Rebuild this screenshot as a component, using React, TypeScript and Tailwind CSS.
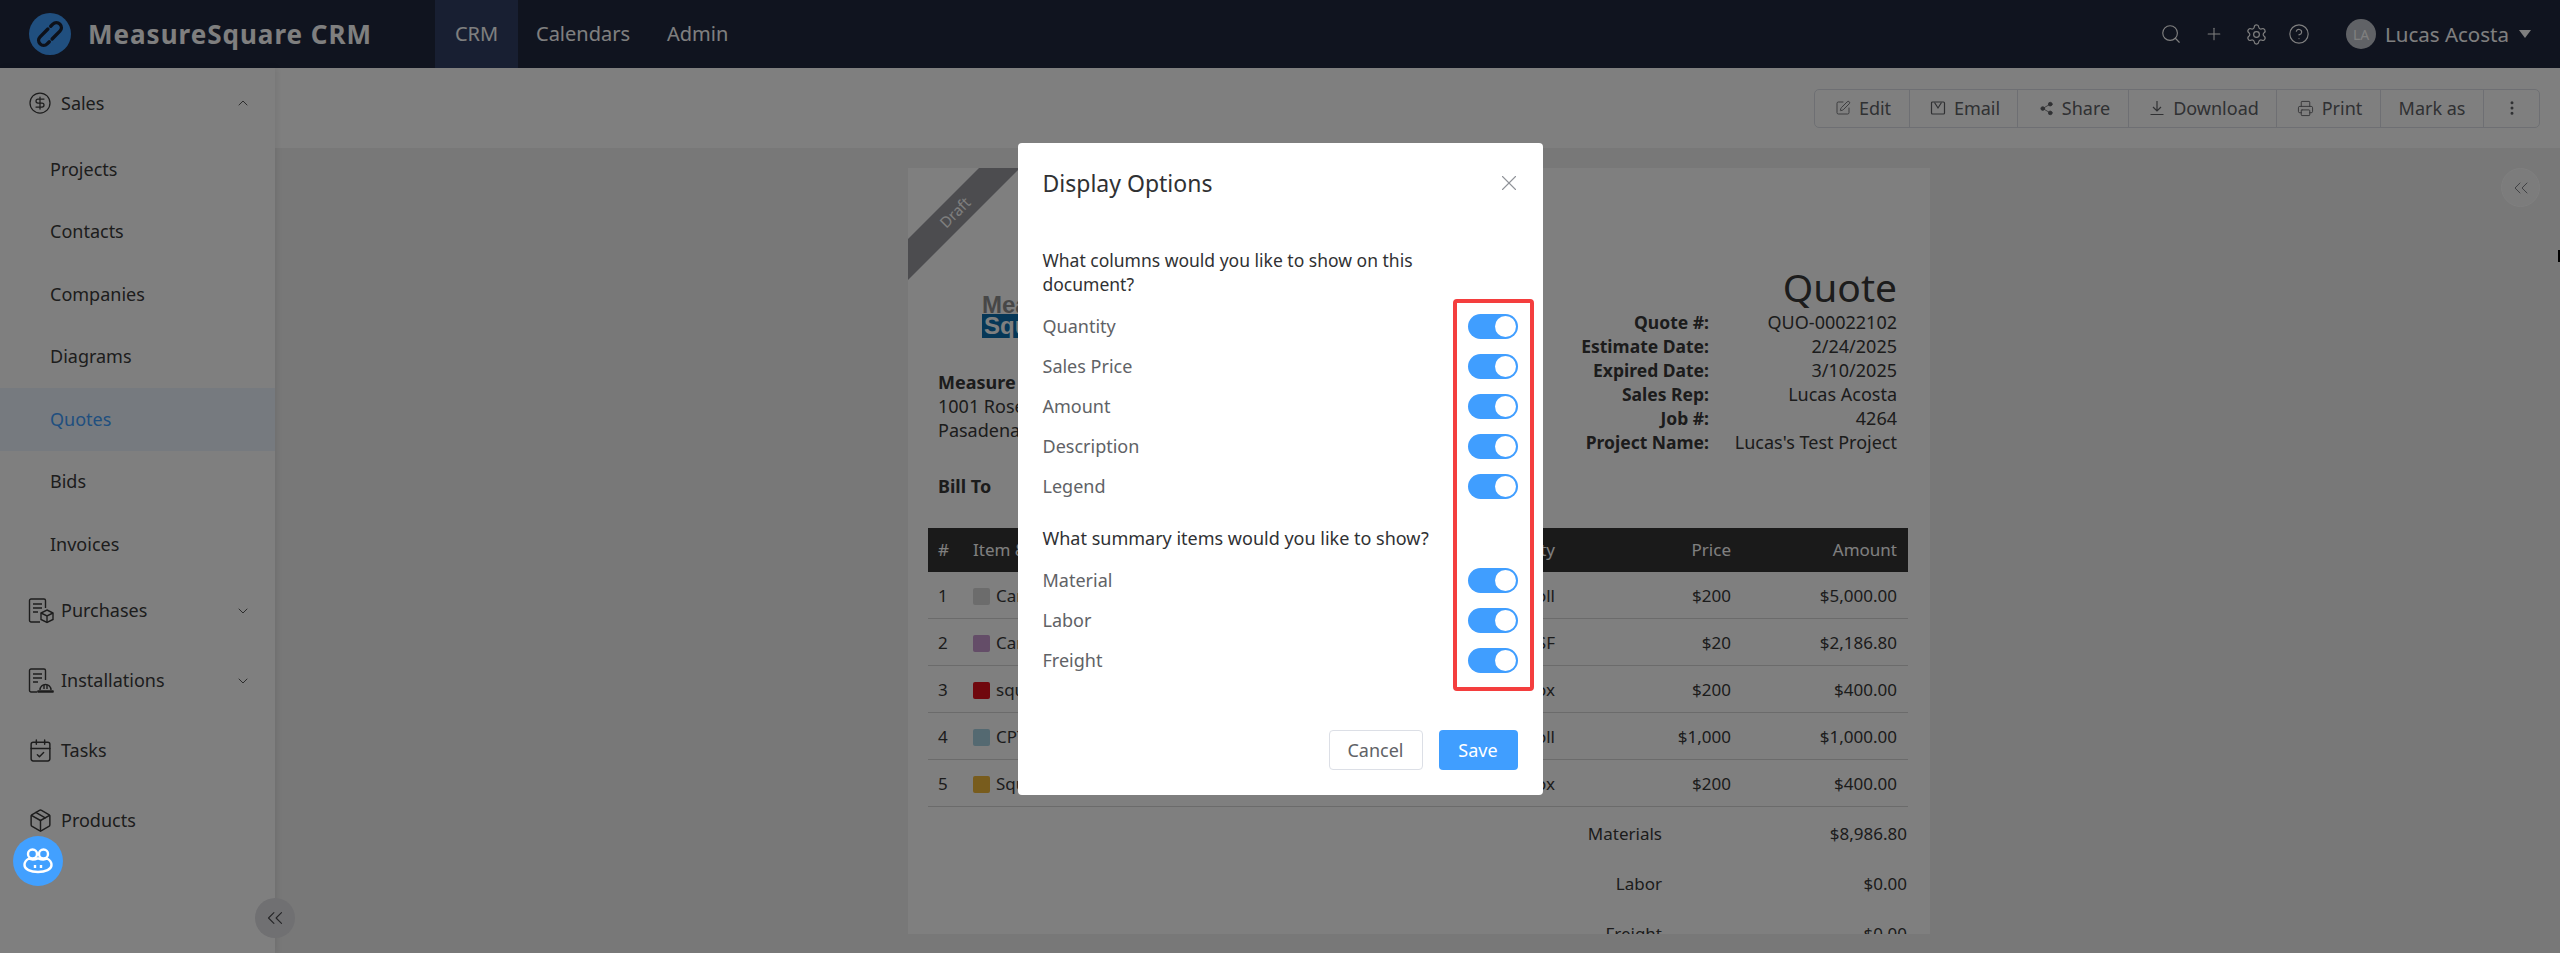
import type { ReactNode } from 'react';
import {
  ChevronDown,
  ChevronUp,
  ChevronsLeft,
  CircleDollarSign,
  CircleHelp,
  CalendarCheck,
  EllipsisVertical,
  Package,
  Plus,
  Printer,
  Search,
  Settings,
  Share2,
  SquarePen,
  X,
} from 'lucide-react';

function LinkLogo() {
  return (
    <svg width="42" height="42" viewBox="0 0 42 42" className="shrink-0">
      <circle cx="21" cy="21" r="21" fill="#409eff" />
      <g transform="rotate(45 21 21)" fill="none" stroke="#1b2233" strokeWidth="3.400" strokeLinecap="round">
        <path d="M16 15v-3a5 5 0 0 1 10 0v11" />
        <path d="M26 27v3a5 5 0 0 1-10 0V19" />
      </g>
    </svg>
  );
}

function PurchasesIcon() {
  return (
    <svg width="26" height="26" viewBox="0 0 26 26" fill="none" stroke="currentColor" strokeWidth="1.4">
      <path d="M12 24H3a1.500 1.500 0 0 1-1.500-1.500v-20A1.500 1.500 0 0 1 3 1h13a1.500 1.500 0 0 1 1.500 1.500V10" />
      <path d="M5 6h9M5 10h9M5 14h5" />
      <path d="M19 12l6 3v6.500l-6 3-6-3V15z" />
      <path d="M13 15l6 3 6-3M19 18v6.500" />
    </svg>
  );
}

function InstallationsIcon() {
  return (
    <svg width="26" height="26" viewBox="0 0 26 26" fill="none" stroke="currentColor" strokeWidth="1.4">
      <path d="M9 24H3a1.500 1.500 0 0 1-1.500-1.500v-20A1.500 1.500 0 0 1 3 1h13a1.500 1.500 0 0 1 1.500 1.500V12" />
      <path d="M5 6h9M5 10h9M5 14h5" />
      <path d="M10 24a1 1 0 0 1 0-1h15a1 1 0 0 1 0 1zM12 22a5.500 5.500 0 0 1 11 0" />
      <path d="M16 17v4M19 17v4" />
    </svg>
  );
}

function EmailIcon() {
  return (
    <svg width="16" height="16" viewBox="0 0 16 16" fill="none" stroke="currentColor" strokeWidth="1.2">
      <rect x="1.500" y="2" width="13" height="12" rx="1" />
      <path d="M4.500 2.500 8 8l3.500-5.500" />
    </svg>
  );
}

function DownloadIcon() {
  return (
    <svg width="16" height="16" viewBox="0 0 16 16" fill="none" stroke="currentColor" strokeWidth="1.2">
      <path d="M8 1v9M4 7l4 4 4-4M1.500 14.500h13" />
    </svg>
  );
}

function FrogIcon() {
  return (
    <svg width="30" height="26" viewBox="0 0 30 26" fill="none" stroke="#fff" strokeWidth="2.4">
      <circle cx="9.500" cy="6" r="4.500" />
      <circle cx="20.500" cy="6" r="4.500" />
      <path d="M6 10.500C3 12 1.500 14.500 1.500 17c0 4.500 6 7 13.500 7s13.500-2.500 13.500-7c0-2.500-1.500-5-4.500-6.500-2.500 1.500-6 1-9-.2-3 1.200-6.500 1.700-9 .2z" />
      <path d="M12 17v3M18 17v3" />
    </svg>
  );
}

function SidebarGroup({ icon, label, open, h }: { icon: ReactNode; label: string; open?: boolean; h: string }) {
  return (
    <div className={`flex items-center pl-[28px] pr-[24px] text-[#3a3a3a] ${h}`}>
      <span className="flex w-[33px] shrink-0 items-center">{icon}</span>
      <span className="flex-1 text-[18px]">{label}</span>
      {label === 'Tasks' || label === 'Products' ? null : open ? (
        <ChevronUp size={16} strokeWidth={1.25} />
      ) : (
        <ChevronDown size={16} strokeWidth={1.25} />
      )}
    </div>
  );
}

function ToolButton({ icon, label, w }: { icon?: ReactNode; label?: string; w: string }) {
  return (
    <button className={`flex h-full items-center justify-center gap-[8px] border-r border-[#dcdfe6] text-[18px] text-[#606266] last:border-r-0 ${w}`}>
      {icon}
      {label}
    </button>
  );
}

function Toggle() {
  return (
    <div className="flex h-[25px] w-[50px] items-center justify-end rounded-full bg-[#409eff] p-[2px]">
      <div className="size-[21px] rounded-full bg-white" />
    </div>
  );
}

function OptionRow({ label }: { label: string }) {
  return (
    <div className="flex h-[40px] items-center justify-between text-[18px] text-[#606266]">
      <span>{label}</span>
      <Toggle />
    </div>
  );
}

const details = [
  ['Quote #:', 'QUO-00022102'],
  ['Estimate Date:', '2/24/2025'],
  ['Expired Date:', '3/10/2025'],
  ['Sales Rep:', 'Lucas Acosta'],
  ['Job #:', '4264'],
  ['Project Name:', "Lucas's Test Project"],
];

const rows = [
  { n: 1, color: 'bg-[#d9d9d9]', name: 'Carpet', unit: 'Roll', price: '$200', amount: '$5,000.00' },
  { n: 2, color: 'bg-[#c99ad0]', name: 'Carpet', unit: 'SF', price: '$20', amount: '$2,186.80' },
  { n: 3, color: 'bg-[#e0101c]', name: 'square', unit: 'Box', price: '$200', amount: '$400.00' },
  { n: 4, color: 'bg-[#a9d3e3]', name: 'CPT', unit: 'Roll', price: '$1,000', amount: '$1,000.00' },
  { n: 5, color: 'bg-[#f0b93a]', name: 'Square', unit: 'Box', price: '$200', amount: '$400.00' },
];

const summary = [
  ['Materials', '$8,986.80'],
  ['Labor', '$0.00'],
  ['Freight', '$0.00'],
];

const subItems = ['Projects', 'Contacts', 'Companies', 'Diagrams', 'Quotes', 'Bids', 'Invoices'];

export default function App() {
  return (
    <div className="relative flex h-screen w-full flex-col overflow-hidden bg-white font-['Noto_Sans',sans-serif] text-[#383838]">
      <header className="flex h-[68px] shrink-0 items-center bg-[#20283e] pl-[29px] pr-[29px] text-white">
        <LinkLogo />
        <span className="ml-[17px] w-[347px] text-[26px] font-bold tracking-[1px]">MeasureSquare CRM</span>
        <nav className="flex h-full items-center text-[20px]">
          <span className="flex h-full w-[83px] items-center justify-center bg-[#303e64]">CRM</span>
          <span className="ml-[18px]">Calendars</span>
          <span className="ml-[37px]">Admin</span>
        </nav>
        <div className="ml-auto flex items-center">
          <Search size={22} strokeWidth={1.25} />
          <Plus size={20} strokeWidth={1.25} className="ml-[22px]" />
          <Settings size={23} strokeWidth={1.25} className="ml-[21px]" />
          <CircleHelp size={22} strokeWidth={1.25} className="ml-[20px]" />
          <span className="ml-[36px] flex size-[30px] items-center justify-center rounded-full bg-[#c0c4cc] text-[14px]">LA</span>
          <span className="ml-[9px] text-[20.500px]">Lucas Acosta</span>
          <span className="ml-[10px] h-0 w-0 border-x-[6px] border-t-[8px] border-x-transparent border-t-white" />
        </div>
      </header>

      <div className="flex min-h-0 flex-1">
        <aside className="z-10 w-[275px] shrink-0 bg-white shadow-[2px_0_6px_rgba(0,0,0,0.08)]">
          <SidebarGroup icon={<CircleDollarSign size={24} strokeWidth={1.25} />} label="Sales" open h="h-[70px]" />
          {subItems.map((item) => (
            <div
              key={item}
              className={`flex h-[62.5px] items-center pl-[50px] text-[18px] ${
                item === 'Quotes' ? 'bg-[#ecf5ff] text-[#409eff]' : 'text-[#3a3a3a]'
              }`}
            >
              {item}
            </div>
          ))}
          <SidebarGroup icon={<PurchasesIcon />} label="Purchases" h="h-[70px]" />
          <SidebarGroup icon={<InstallationsIcon />} label="Installations" h="h-[70px]" />
          <SidebarGroup icon={<CalendarCheck size={25} strokeWidth={1.4} />} label="Tasks" h="h-[70px]" />
          <SidebarGroup icon={<Package size={25} strokeWidth={1.4} />} label="Products" h="h-[70px]" />
        </aside>

        <main className="relative flex min-w-0 flex-1 flex-col bg-[#f0f0f0]">
          <div className="flex h-[80px] shrink-0 items-center justify-end bg-white pr-[20px]">
            <div className="flex h-[39px] rounded-[5px] border border-[#dcdfe6]">
              <ToolButton icon={<SquarePen size={16} strokeWidth={1.25} />} label="Edit" w="w-[95px] pl-[2px]" />
              <ToolButton icon={<EmailIcon />} label="Email" w="w-[108px] pl-[3px]" />
              <ToolButton icon={<Share2 size={15} strokeWidth={1.25} fill="currentColor" />} label="Share" w="w-[111px] pl-[3px]" />
              <ToolButton icon={<DownloadIcon />} label="Download" w="w-[148px] pl-[3px]" />
              <ToolButton icon={<Printer size={17} strokeWidth={1.25} />} label="Print" w="w-[104px] pl-[2px]" />
              <ToolButton label="Mark as" w="w-[103px]" />
              <ToolButton icon={<EllipsisVertical size={18} strokeWidth={2} />} w="w-[55px]" />
            </div>
          </div>

          <div className="min-h-0 flex-1 pb-[19px] pl-[633px] pt-[20px]">
            <div className="relative h-full w-[1022px] overflow-hidden bg-white pl-[20px] pr-[22px]">
              <div className="absolute -left-[63px] top-[30px] flex h-[29px] w-[220px] -rotate-45 items-center justify-center bg-[#98989e] text-[15px] text-white">
                Draft
              </div>

              <div className="flex justify-between pl-[10px] pr-[11px]">
                <div className="pt-[127px]">
                  <div className="ml-[44px] h-[43px] w-[150px] font-['Liberation_Sans',sans-serif] text-[24px] font-bold leading-[19px] text-[#8f8f8f]">
                    Measure
                    <div className="h-[24px] bg-[#0c6fae] pl-[2px] leading-[24px] text-white">Square</div>
                  </div>
                  <div className="mt-[32px] text-[18px] leading-[24px]">
                    <div className="font-bold">Measure Square</div>
                    <div>1001 Rose Ave</div>
                    <div>Pasadena, CA</div>
                  </div>
                  <div className="mt-[32px] text-[18px] font-bold leading-[24px]">Bill To</div>
                </div>
                <div className="pt-[95px] text-right">
                  <div className="text-[39px] leading-[47px]">Quote</div>
                  {details.map(([label, value]) => (
                    <div key={label} className="flex justify-end text-[18px] leading-[24px]">
                      <span className="text-[17.5px] font-bold">{label}</span>
                      <span className="w-[188px]">{value}</span>
                    </div>
                  ))}
                </div>
              </div>

              <div className="mt-[30px] text-[17px]">
                <div className="grid h-[44px] grid-cols-[35px_582px_176px_166px] items-center bg-[#343434] pl-[10px] text-white">
                  <span>#</span>
                  <span className="flex justify-between">
                    <span>Item & Description</span>
                    <span>Quantity</span>
                  </span>
                  <span className="text-right">Price</span>
                  <span className="text-right">Amount</span>
                </div>
                {rows.map((row) => (
                  <div key={row.n} className="grid h-[47px] grid-cols-[35px_582px_176px_166px] items-center border-b border-[#d6d6d6] pl-[10px] pt-[2px]">
                    <span>{row.n}</span>
                    <span className="flex items-center justify-between">
                      <span className="flex items-center gap-[6px]">
                        <span className={`size-[17px] rounded-[2px] ${row.color}`} />
                        {row.name}
                      </span>
                      <span>{row.unit}</span>
                    </span>
                    <span className="text-right">{row.price}</span>
                    <span className="text-right">{row.amount}</span>
                  </div>
                ))}
                {summary.map(([label, value]) => (
                  <div key={label} className="grid h-[50px] grid-cols-[734px_245px] items-center pt-[3px] text-right">
                    <span>{label}</span>
                    <span>{value}</span>
                  </div>
                ))}
              </div>
            </div>
          </div>

          <button className="absolute right-[20px] top-[100px] flex size-[39px] items-center justify-center rounded-full border border-white bg-[#f8f8f8] text-[#808388]">
            <ChevronsLeft size={24} strokeWidth={1} />
          </button>
        </main>
      </div>

      <button className="absolute bottom-[15px] left-[255px] z-10 flex size-[40px] items-center justify-center rounded-full bg-[#e0e0e4] text-[#48484c]">
        <ChevronsLeft size={26} strokeWidth={1} />
      </button>

      <div className="absolute inset-0 z-20 flex justify-center bg-black/50 pt-[143px]">
        <div className="relative h-[652px] w-[525px] rounded-[4px] bg-white px-[25px] pt-[24px]">
          <div className="flex h-[32px] items-center justify-between">
            <span className="text-[23px] text-[#303133]">Display Options</span>
            <X size={26} strokeWidth={1} className="-mr-[4px] text-[#909399]" />
          </div>

          <p className="mt-[49px] max-w-[410px] text-[17.5px] leading-[24px] text-[#303133]">
            What columns would you like to show on this document?
          </p>
          <div className="mt-[10px]">
            {['Quantity', 'Sales Price', 'Amount', 'Description', 'Legend'].map((label) => (
              <OptionRow key={label} label={label} />
            ))}
          </div>

          <p className="mt-[20px] text-[18px] leading-[24px] text-[#303133]">What summary items would you like to show?</p>
          <div className="mt-[10px]">
            {['Material', 'Labor', 'Freight'].map((label) => (
              <OptionRow key={label} label={label} />
            ))}
          </div>

          <div className="mt-[50px] flex justify-end gap-[16px] text-[18px]">
            <button className="h-[40px] w-[94px] rounded-[4px] border border-[#dcdfe6] text-[#606266]">Cancel</button>
            <button className="h-[40px] w-[79px] rounded-[4px] bg-[#409eff] text-white">Save</button>
          </div>

          <div className="absolute left-[435px] top-[156px] h-[392px] w-[81px] rounded-[4px] border-4 border-[#f43e3e]" />
        </div>
      </div>

      <div className="absolute bottom-[67px] left-[13px] z-30 flex size-[50px] items-center justify-center rounded-full bg-[#42a0ff]">
        <FrogIcon />
      </div>
      <div className="absolute right-0 top-[250px] z-30 h-[12px] w-[2px] bg-black" />
    </div>
  );
}
